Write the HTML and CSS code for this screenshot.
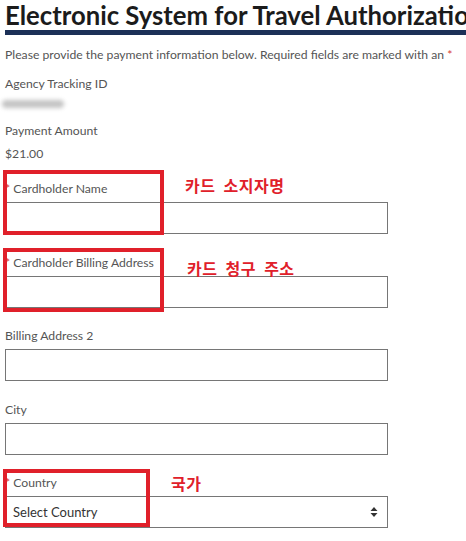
FILE: index.html
```html
<!DOCTYPE html>
<html lang="en">
<head>
  <meta charset="UTF-8" />
  <title>Payment Information</title>
  <link rel="stylesheet" href="styles.css">
</head>
<body>
  <div class="page">
    <h1 class="title">Electronic System for Travel Authorization</h1>
    <div class="rule"></div>

    <form class="form">
      <p class="intro">Please provide the payment information below. Required fields are marked with an <span class="req">*</span></p>

      <div class="info">
        <div class="label">Agency Tracking ID</div>
        <div class="blurred"></div>
      </div>

      <div class="info info-amount">
        <div class="label">Payment Amount</div>
        <div class="value">$21.00</div>
      </div>

      <div class="field field-first">
        <label class="label"><span class="req">*</span> Cardholder Name</label>
        <input type="text" class="input">
      </div>

      <div class="field">
        <label class="label"><span class="req">*</span> Cardholder Billing Address</label>
        <input type="text" class="input">
      </div>

      <div class="field">
        <label class="label">Billing Address 2</label>
        <input type="text" class="input">
      </div>

      <div class="field">
        <label class="label">City</label>
        <input type="text" class="input">
      </div>

      <div class="field">
        <label class="label"><span class="req">*</span> Country</label>
        <div class="select">
          <span>Select Country</span>
          <svg width="8" height="12" viewBox="0 0 8 12"><path d="M4 1 L7.5 5 H0.5 Z M4 11 L0.5 7 H7.5 Z" fill="#333"/></svg>
        </div>
      </div>
    </form>

    <!-- annotations drawn over the form -->
    <div class="box box-name"></div>
    <div class="note note-name">카드 소지자명</div>
    <div class="box box-addr"></div>
    <div class="note note-addr">카드 청구 주소</div>
    <div class="box box-country"></div>
    <div class="note note-country">국가</div>
  </div>
</body>
</html>
```

FILE: styles.css
```css
body {
  margin: 0;
  background: #fff;
  font-family: 'Lato', sans-serif;
  overflow: hidden;
}
.page {
  position: relative;
  padding-left: 5px;
  height: 541px;
  overflow: hidden;
}
.title {
  margin: 0;
  font-size: 25.7px;
  font-weight: 700;
  color: #1b1b1b;
  white-space: nowrap;
  line-height: 30px;
}
.rule {
  height: 5px;
  background: #1c3057;
}
.form {
  width: 383px;
}
.intro {
  margin: 12px 0 0;
  font-size: 12.2px;
  line-height: 16px;
  color: #555;
  white-space: nowrap;
}
.req { color: #d83933; }
.label {
  display: block;
  font-size: 12.2px;
  color: #555;
  line-height: 16px;
}
.info { margin-top: 13px; }
.info-amount { margin-top: 15px; }
.blurred {
  width: 62px;
  height: 8px;
  margin: 8px 0 0 -3px;
  background: #c4c4c4;
  border-radius: 4px;
  filter: blur(2px);
}
.value {
  margin-top: 7px;
  font-size: 12.2px;
  line-height: 16px;
  color: #555;
}
.field { margin-top: 20.5px; }
.field-first { margin-top: 19px; }
.input, .select {
  display: block;
  box-sizing: border-box;
  width: 383px;
  height: 32px;
  margin-top: 5px;
  border: 1px solid #767676;
  background: #fff;
}
.select {
  display: flex;
  align-items: center;
  justify-content: space-between;
  padding: 0 9px 0 7px;
  font-size: 13px;
  color: #333;
}
.box {
  position: absolute;
  border: 4px solid #e0202a;
}
.box-name { left: 3px; top: 170px; width: 153px; height: 57px; }
.box-addr { left: 3px; top: 248px; width: 153px; height: 56px; }
.box-country { left: 3px; top: 469px; width: 139px; height: 50px; }
.note {
  position: absolute;
  font-family: 'Noto Sans CJK KR', sans-serif;
  font-weight: 700;
  font-size: 16px;
  letter-spacing: 0.5px;
  word-spacing: 4px;
  color: #e0202a;
  line-height: 20px;
}
.note-name { left: 185px; top: 175px; }
.note-addr { left: 187px; top: 258px; }
.note-country { left: 171px; top: 473px; }
```
